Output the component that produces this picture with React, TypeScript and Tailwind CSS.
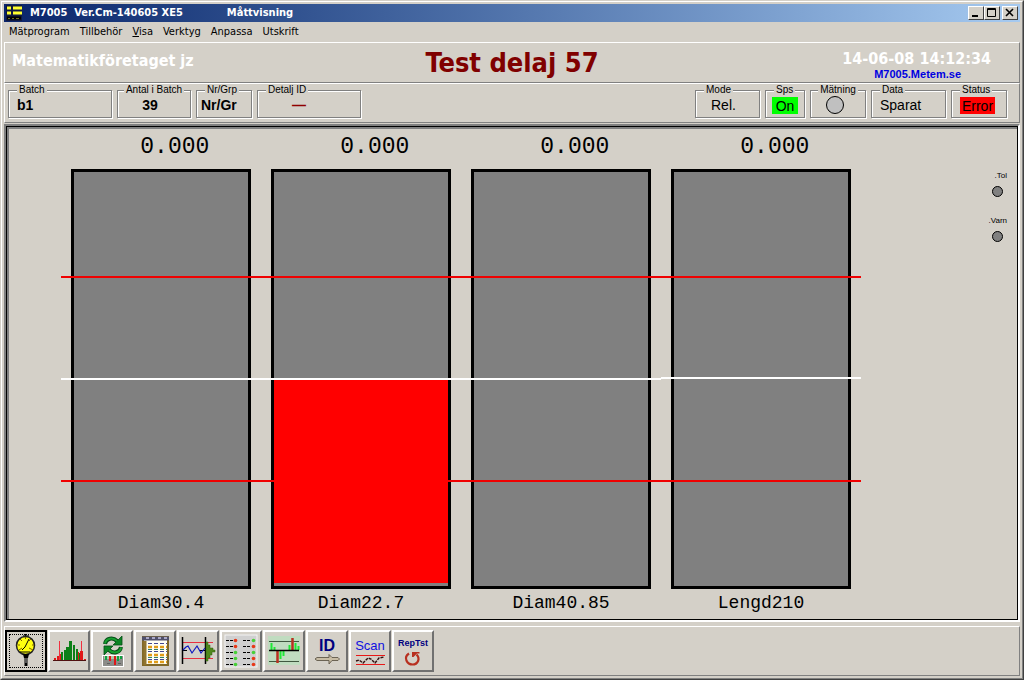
import type { ReactNode } from 'react';

interface Channel {
  name: string;
  value: string;
  // positions in percent of the gauge height
  nominal: number;
  upper: number;
  lower: number;
  fill?: { top: number; height: number };
}

const CHANNELS: Channel[] = [
  { name: 'Diam30.4', value: '0.000', nominal: 49.8, upper: 25.5, lower: 74 },
  { name: 'Diam22.7', value: '0.000', nominal: 49.8, upper: 25.5, lower: 74, fill: { top: 50.2, height: 48.4 } },
  { name: 'Diam40.85', value: '0.000', nominal: 49.8, upper: 25.5, lower: 74 },
  { name: 'Lengd210', value: '0.000', nominal: 49.5, upper: 25.5, lower: 74 },
];

const RAISED = 'border-t-white border-l-white border-r-[#808080] border-b-[#808080]';

function AppIcon() {
  return (
    <svg width="16" height="16" viewBox="0 0 16 16" aria-hidden="true">
      <rect width="16" height="16" fill="#101840" />
      <path d="M1 3h4M7 3h9M1 8h4M7 8h9" stroke="#ffff30" strokeWidth="3" />
      <path d="M1 13h14" stroke="#000" strokeWidth="3" />
      <path d="M2 13.500h2M6 13.500h2M10 13.500h3" stroke="#707020" />
    </svg>
  );
}

function TitleButton({ label, children }: { label: string; children: ReactNode }) {
  return (
    <button
      aria-label={label}
      className="h-[14px] w-4 border border-t-white border-l-white border-r-[#404040] border-b-[#404040] bg-[#d4d0c8]"
    >
      <svg width="14" height="12" viewBox="0 0 14 12" fill="none" stroke="#000" className="block">
        {children}
      </svg>
    </button>
  );
}

function TitleBar() {
  return (
    <div className="flex h-[18px] items-center bg-linear-to-r from-[#0a246a] to-[#a6caf0] pr-[2px] pl-[2px]">
      <AppIcon />
      <h1 className="ml-2 flex-1 text-[11px] font-bold whitespace-pre text-white">
        M7005  Ver.Cm-140605 XE5
        <span className="ml-11">Måttvisning</span>
      </h1>
      <TitleButton label="Minimera">
        <path d="M3 9h6" strokeWidth="2" />
      </TitleButton>
      <TitleButton label="Maximera">
        <path d="M2.500 1.500h8v8h-8zM2 2.500h9" />
      </TitleButton>
      <div className="ml-[2px] flex">
        <TitleButton label="Stäng">
          <path d="M3 2l7 7M10 2l-7 7" strokeWidth="1.600" />
        </TitleButton>
      </div>
    </div>
  );
}

function MenuBar() {
  return (
    <nav className="flex h-5 items-center gap-[10px] pl-[5px] text-[11px]">
      <button>Mätprogram</button>
      <button>Tillbehör</button>
      <button>
        <u>V</u>isa
      </button>
      <button>Verktyg</button>
      <button>Anpassa</button>
      <button>Utskrift</button>
    </nav>
  );
}

function Header() {
  return (
    <header className={`grid h-[41px] grid-cols-[1fr_auto_1fr] items-center border ${RAISED}`}>
      <div className="pb-1 pl-[7px] text-[16px] leading-5 font-bold text-white">Matematikföretaget jz</div>
      <h2 className="text-[27px] leading-8 font-bold text-[#800000]">Test delaj 57</h2>
      <div className="flex flex-col items-end pt-1 pr-[28px] font-bold">
        <time className="text-[16px] leading-[18px] text-white">14-06-08 14:12:34</time>
        <a
          href="#metem"
          className="mr-[30px] font-['Liberation_Sans',Arial,sans-serif] text-[11px] leading-3 text-[#0000e0]"
        >
          M7005.Metem.se
        </a>
      </div>
    </header>
  );
}

function GroupBox({ title, className, children }: { title: string; className: string; children: ReactNode }) {
  return (
    <fieldset
      className={`h-[34px] border border-[#808080] shadow-[1px_1px_0_#fff,inset_1px_1px_0_#fff] ${className}`}
    >
      <legend className="mx-auto bg-[#d4d0c8] px-[2px] text-[10px] leading-[12px]">{title}</legend>
      <div className="flex h-[18px] items-center text-[14px] leading-[18px]">{children}</div>
    </fieldset>
  );
}

function StatusRow() {
  return (
    <section
      className={`flex h-10 gap-[5px] border px-[3px] pr-[12px] font-['Liberation_Sans',Arial,sans-serif] ${RAISED}`}
    >
      <GroupBox title="Batch" className="w-[104px] [&>legend]:ml-[8px]">
        <b className="pl-[8px]">b1</b>
      </GroupBox>
      <GroupBox title="Antal i Batch" className="w-[74px]">
        <b className="w-full pr-2 text-center">39</b>
      </GroupBox>
      <GroupBox title="Nr/Grp" className="w-[56px] [&>legend]:ml-[8px]">
        <b className="pl-1">Nr/Gr</b>
      </GroupBox>
      <GroupBox title="Detalj ID" className="mr-auto w-[104px] [&>legend]:ml-[8px]">
        <b className="pl-[34px] text-[#900000]">—</b>
      </GroupBox>
      <GroupBox title="Mode" className="w-[65px] [&>legend]:ml-[8px]">
        <span className="pl-[15px]">Rel.</span>
      </GroupBox>
      <GroupBox title="Sps" className="w-[40px] [&>legend]:ml-[8px]">
        <span className="mx-auto h-[17px] w-[26px] bg-[#00ff00] text-center">On</span>
      </GroupBox>
      <GroupBox title="Mätning" className="w-[56px]">
        <span className="ml-[15px] size-[18px] rounded-full border border-black bg-[#c0c0c0]" />
      </GroupBox>
      <GroupBox title="Data" className="w-[75px] [&>legend]:ml-[8px]">
        <span className="pl-2">Sparat</span>
      </GroupBox>
      <GroupBox title="Status" className="w-[56px] [&>legend]:ml-[8px]">
        <span className="ml-2 h-[17px] w-[35px] bg-[#ff0000] text-center">Error</span>
      </GroupBox>
    </section>
  );
}

function Gauge({ channel }: { channel: Channel }) {
  const { name, value, nominal, upper, lower, fill } = channel;
  return (
    <div className="flex flex-col text-center font-['Liberation_Mono','Courier_New',monospace]">
      <output className="h-10 pt-1 text-[23px] leading-7 font-medium whitespace-pre">{'  ' + value}</output>
      <div className="relative flex flex-1 px-[10px]">
        <div className="flex-1 border-3 border-black bg-[#808080]" />
        <div className="absolute inset-x-0 h-[2px] bg-[#f00000]" style={{ top: `${upper}%` }} />
        <div className="absolute inset-x-0 h-[2px] bg-[#f00000]" style={{ top: `${lower}%` }} />
        {fill && (
          <div
            className="absolute inset-x-[13px] bg-[#ff0000]"
            style={{ top: `${fill.top}%`, height: `${fill.height}%` }}
          />
        )}
        <div className="absolute inset-x-0 h-[2px] bg-white" style={{ top: `${nominal}%` }} />
      </div>
      <div className="h-[30px] pt-[2px] text-[18px] leading-6">{name}</div>
    </div>
  );
}

function Lamp({ label }: { label: string }) {
  return (
    <div className="flex h-[45px] flex-col items-end">
      <span className="text-[8px] leading-[10px]">{label}</span>
      <span className="mt-[5px] mr-1 size-[11px] rounded-full border border-black bg-[#808080]" />
    </div>
  );
}

function ChartPanel() {
  return (
    <main className="mt-px mb-[2px] flex flex-1 border-2 border-t-[#808080] border-l-[#808080] border-r-white border-b-white">
      <div className="flex flex-1 border border-black">
        <div className="flex flex-1 border-t-2 border-l-2 border-t-[#808080] border-l-[#808080] pl-[52px]">
          <div className="grid flex-1 grid-cols-4">
            {CHANNELS.map((c) => (
              <Gauge key={c.name} channel={c} />
            ))}
          </div>
          <aside className="w-[156px] pt-[42px] pr-[10px] font-['Liberation_Sans',Arial,sans-serif]">
            <Lamp label=".Tol" />
            <Lamp label=".Varn" />
          </aside>
        </div>
      </div>
    </main>
  );
}

function Histogram() {
  return (
    <>
      <path d="M11.500 11v19M33.500 11v19" stroke="#f03040" />
      <path d="M6 28h2v2h-2zM9 26h2v4h-2zM12 24h3v6h-3zM28 22h3v8h-3zM32 21h3v9h-3zM36 29h2v1h-2z" fill="#e01818" />
      <path d="M13 22h2v8h-2zM16 20h2v10h-2zM18 17h3v13h-3zM21 11h3v19h-3zM25 15h2v15h-2zM28 19h2v11h-2zM31 23h1v7h-1z" fill="#0c8018" />
      <path d="M5 30.500h33" stroke="#501010" />
    </>
  );
}

function DialGauge() {
  return (
    <>
      <path d="M18 5h6v4h-6z" fill="#555" />
      <path d="M20.500 3v4" stroke="#000" />
      <circle cx="20.500" cy="15.500" r="9" fill="#ffff10" stroke="#222" strokeWidth="1.500" />
      <path d="M13 15h2M27 15h2M15 9l2 2M20.500 7v2M26 9l-2 2M14 20l3-2M28 20l-4-2" stroke="#806000" />
      <path d="M17 20l3-3 4-8M15 22h10" stroke="#000" fill="none" />
      <path d="M18 24h6l-1 4h-4z" fill="#000" />
      <path d="M21 28v8" stroke="#000" strokeWidth="3" />
      <path d="M21 28v5" stroke="#aaa" />
    </>
  );
}

function Refresh() {
  return (
    <>
      <g fill="none" stroke="#064d18" strokeWidth="4">
        <path d="M14 14c1-6 8-7 12-3M30 17c-1 6-8 7-12 3" />
      </g>
      <path d="M31 6v9h-9zM13 25v-9h9z" fill="#0c8424" stroke="#064d18" strokeWidth="0.800" />
      <path d="M14 13.500c1-5.500 8-6.500 12-2.500M30 17.500c-1 5.500-8 6.500-12 2.500" fill="none" stroke="#18a030" strokeWidth="2" />
      <rect x="11.500" y="25.500" width="21" height="11" fill="#8c8c88" stroke="#fff" />
      <path d="M13 27.500h18" stroke="#b0c8a8" strokeWidth="3" />
      <path d="M15 26v4M27 26v5M30 26v3" stroke="#10a040" strokeWidth="2" />
      <path d="M19 26v5M24 26v9" stroke="#e01818" strokeWidth="2" />
      <path d="M16 33.500h3M27 33.500h3" stroke="#606060" />
    </>
  );
}

function TableIcon() {
  return (
    <>
      <rect x="9" y="7" width="25" height="28" fill="#fffff4" stroke="#806828" strokeWidth="2" />
      <path d="M8 8.500h27" stroke="#50506c" strokeWidth="4" />
      <path d="M12 8h3M18 8h3M24 8h3M30 8h3" stroke="#aaa8c8" strokeWidth="2" />
      <path d="M11 11v24" stroke="#907430" strokeWidth="3" />
      <path d="M14 13.500h19M14 21.500h19M14 29.500h19" stroke="#444890" strokeDasharray="4 2" />
      <path d="M14 17h19M14 25h19M14 32h19" stroke="#e09c18" strokeWidth="2.500" strokeDasharray="4 2" />
      <path d="M14 19.500h19M14 27.500h19" stroke="#308068" strokeDasharray="4 2" />
    </>
  );
}

function TrendIcon() {
  return (
    <>
      <path d="M6 12.500h30M6 28.500h30" stroke="#e83040" />
      <path d="M5.500 7v27M28.500 7v27" stroke="#000" strokeWidth="1.500" />
      <path d="M5 20.500h5M22 20.500h10" stroke="#000" />
      <path d="M6 20l3-3 2-1 4 7 5-7 4 7 4-5" fill="none" stroke="#1018c0" strokeWidth="1.200" />
      <path d="M29 12h2v3h2v3h3v2h2v2h-3v3h-2v3h-2v3h-2z" fill="#50881c" stroke="#30600c" strokeWidth="0.500" />
    </>
  );
}

function LampListIcon() {
  const rows = [10.5, 16.5, 22.5, 28.5, 34.5];
  return (
    <>
      <rect x="5" y="5" width="32" height="32" fill="#d0d0d0" stroke="#f4f4f4" />
      {rows.map((y, i) => (
        <g key={y}>
          <path d={`M6 ${y}h3M10 ${y}h3M23 ${y}h3M27 ${y}h3`} stroke="#000" />
          <circle cx="15.500" cy={y} r="1.800" fill={i < 2 ? '#e83818' : '#48d038'} />
          <circle cx="33.500" cy={y} r="1.800" fill={i === 0 || i === 2 ? '#48d038' : '#e83818'} />
        </g>
      ))}
    </>
  );
}

function DeviationIcon() {
  return (
    <>
      <rect x="5" y="6" width="32" height="29" fill="#c0dcc0" />
      <path d="M6 11.500h30M6 31.500h30" stroke="#405840" />
      <path d="M8.500 13v7M11.500 17v3M17.500 21v8M20.500 21v5M26.500 15v5M32.500 13v7M35.500 16v4" stroke="#20e838" strokeWidth="2" />
      <path d="M14.500 21v12M29.500 8v12" stroke="#b83020" strokeWidth="2.500" />
      <path d="M6 20.500h30" stroke="#000" strokeWidth="1.500" />
    </>
  );
}

function ArrowPart() {
  return (
    <path
      d="M9 29l2-1.500h12v-3l3 3h6l1.500 1.500-1.500 1.500h-6l-3 3.500v-3.500h-12z"
      fill="#c8bca4"
      stroke="#605848"
      strokeWidth="0.900"
    />
  );
}

function ScanLines() {
  return (
    <>
      <path d="M7 25.500h29M7 34.500h29" stroke="#e81818" />
      <path d="M7 31l3-1 4 3 5-5 3 1 4 4 4-5 5-1" fill="none" stroke="#301010" strokeWidth="1.400" strokeDasharray="3 1" />
    </>
  );
}

function RepeatArrow() {
  return (
    <>
      <path d="M17 23.500c-6 4-2 11 3.500 11s8-6 4-10" fill="none" stroke="#b83020" strokeWidth="2.200" />
      <path d="M20 22h7.500v1.500h-2.500l-3.500 3.500h-1.500z" fill="#b83020" />
    </>
  );
}

function ToolButton({
  label,
  pressed,
  caption,
  children,
}: {
  label: string;
  pressed?: boolean;
  caption?: ReactNode;
  children: ReactNode;
}) {
  return (
    <button
      aria-label={label}
      aria-pressed={pressed}
      className={
        pressed
          ? 'relative size-[42px] border-2 border-black bg-[#d4d0c8] p-[2px] outline-1 outline-dotted outline-black [outline-offset:-5px]'
          : 'relative size-[42px] border-2 border-t-white border-l-white border-r-[#707070] border-b-[#707070] bg-[#d4d0c8]'
      }
    >
      <svg
        viewBox={pressed ? '4 4 34 34' : '2 2 38 38'}
        className="block size-full"
        aria-hidden="true"
      >
        {children}
      </svg>
      {caption && (
        <span className="absolute inset-x-0 top-0 font-['Liberation_Sans',Arial,sans-serif]">{caption}</span>
      )}
    </button>
  );
}

function Toolbar() {
  return (
    <footer className={`mt-[2px] flex h-[50px] items-center gap-px border ${RAISED}`}>
      <ToolButton label="Måttvisning" pressed>
        <DialGauge />
      </ToolButton>
      <ToolButton label="Histogram">
        <Histogram />
      </ToolButton>
      <ToolButton label="Uppdatera">
        <Refresh />
      </ToolButton>
      <ToolButton label="Tabell">
        <TableIcon />
      </ToolButton>
      <ToolButton label="Trend">
        <TrendIcon />
      </ToolButton>
      <ToolButton label="Status">
        <LampListIcon />
      </ToolButton>
      <ToolButton label="Avvikelse">
        <DeviationIcon />
      </ToolButton>
      <ToolButton
        label="ID"
        caption={<b className="block pt-1 text-[16px] leading-5 text-[#000080]">ID</b>}
      >
        <ArrowPart />
      </ToolButton>
      <ToolButton
        label="Scan"
        caption={<span className="block pt-1 text-[13px] leading-5 text-[#1010e0]">Scan</span>}
      >
        <ScanLines />
      </ToolButton>
      <ToolButton
        label="RepTst"
        caption={<b className="block pt-1 text-[9px] leading-[14px] text-[#000080]">RepTst</b>}
      >
        <RepeatArrow />
      </ToolButton>
    </footer>
  );
}

export default function App() {
  return (
    <div className="flex min-h-screen flex-col border border-t-[#d4d0c8] border-l-[#d4d0c8] border-r-[#404040] border-b-[#404040] bg-[#d4d0c8] font-['DejaVu_Sans_Condensed',Tahoma,sans-serif] text-black">
      <div className={`flex flex-1 flex-col border p-[2px] ${RAISED}`}>
        <TitleBar />
        <MenuBar />
        <Header />
        <StatusRow />
        <ChartPanel />
        <Toolbar />
      </div>
    </div>
  );
}
